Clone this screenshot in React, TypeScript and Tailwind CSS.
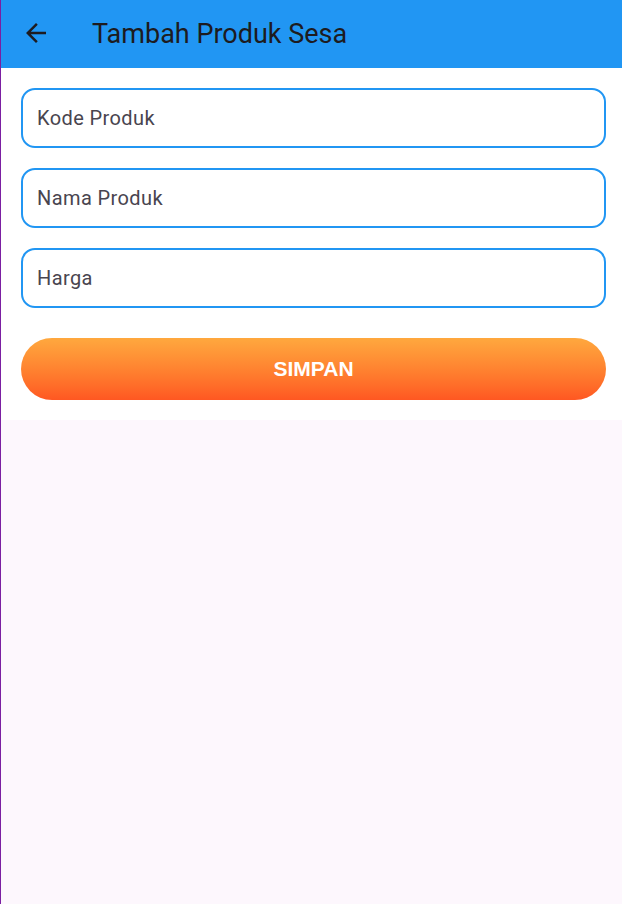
import React from 'react'

const fields = ['Kode Produk', 'Nama Produk', 'Harga']

function BackArrow() {
  return (
    <svg width="30" height="30" viewBox="0 0 24 24" fill="#1d1b20">
      <path d="M20 11H7.83l5.59-5.59L12 4l-8 8 8 8 1.41-1.41L7.83 13H20v-2z" />
    </svg>
  )
}

export default function App() {
  return (
    <div className="flex min-h-[904px] w-full flex-col border-l border-[#7b1fa2] bg-[#fdf7fd] font-['Roboto',sans-serif]">
      <header className="flex h-[68px] items-center bg-[#2196f3]">
        <button className="ml-[20px] mb-[2px] flex h-[30px] w-[30px] items-center justify-center">
          <BackArrow />
        </button>
        <h1 className="ml-[41px] text-[27px] leading-none text-[#1d1b20]">Tambah Produk Sesa</h1>
      </header>

      <div className="flex flex-col gap-5 bg-white pt-5 pr-4 pb-5 pl-5">
        {fields.map((label) => (
          <div
            key={label}
            className="flex h-[60px] items-center rounded-[14px] border-2 border-[#2196f3] px-[14px]"
          >
            <span className="text-[20px] tracking-[0.4px] text-[#49454f]">{label}</span>
          </div>
        ))}
        <button className="mt-[10px] h-[62px] rounded-full bg-gradient-to-b from-[#ffa83e] to-[#ff5722] font-['Liberation_Sans',sans-serif] text-[21px] font-bold text-white">
          SIMPAN
        </button>
      </div>
    </div>
  )
}
